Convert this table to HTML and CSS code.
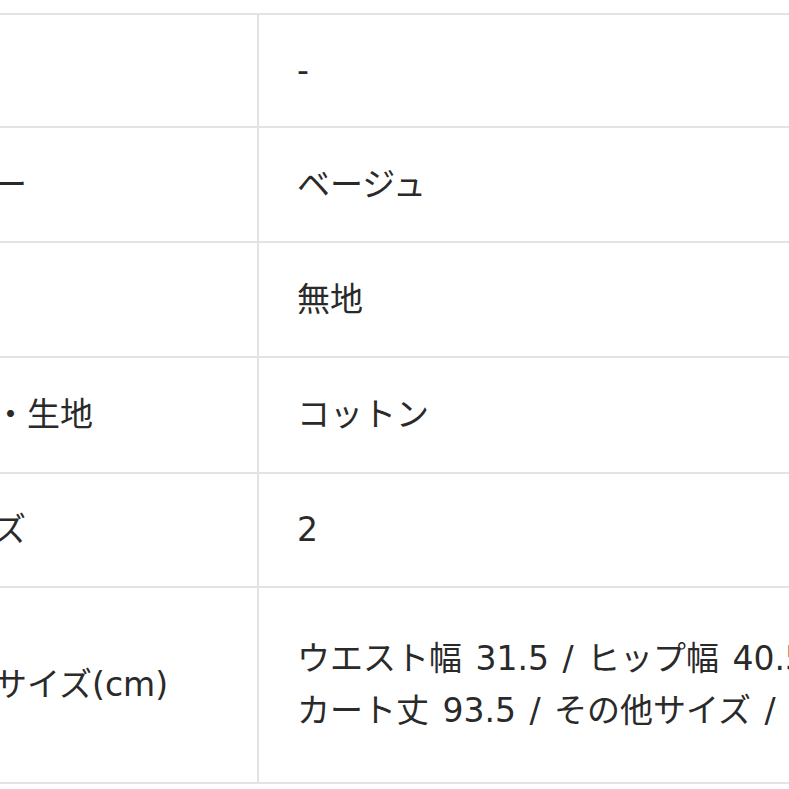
FILE: index.html
```html
<!DOCTYPE html>
<html lang="ja">
<head>
<meta charset="utf-8">
<link rel="stylesheet" href="styles.css">
</head>
<body>
<div class="spec">
  <div class="cell label r1">型番</div>
  <div class="cell value r1">-</div>
  <div class="cell label r2">カラー</div>
  <div class="cell value r2">ベージュ</div>
  <div class="cell label r3">柄</div>
  <div class="cell value r3">無地</div>
  <div class="cell label r4">素材・生地</div>
  <div class="cell value r4">コットン</div>
  <div class="cell label r5">サイズ</div>
  <div class="cell value r5">2</div>
  <div class="cell label r6">実寸サイズ(cm)</div>
  <div class="cell value r6">
    <div class="lines">
      <span class="line">ウエスト幅 31.5 / ヒップ幅 40.5 / ス</span>
      <span class="line">カート丈 93.5 / その他サイズ / 平置き</span>
    </div>
  </div>
</div>
</body>
</html>
```

FILE: styles.css
```css
html, body {
  margin: 0;
  padding: 0;
  background: #ffffff;
  overflow: hidden;
}
body {
  width: 789px;
  height: 789px;
  font-family: "DejaVu Sans", "Noto Sans CJK JP", sans-serif;
  color: #2a2a2a;
  font-size: 33px;
  line-height: 52px;
}
.spec {
  display: grid;
  grid-template-columns: 364px 760px;
  grid-template-rows: 113px 115px 115px 116px 114px 196px;
  margin-left: -105px;
  margin-top: 13px;
  border-top: 2px solid #e3e3e3;
  width: 1124px;
}
.cell {
  display: flex;
  align-items: center;
  padding-left: 38px;
  border-bottom: 2px solid #e3e3e3;
  box-sizing: border-box;
  white-space: nowrap;
}
.label {
  padding-left: 33px;
  border-right: 2px solid #e3e3e3;
}
.value {
  word-spacing: 3px;
}
.lines {
  display: flex;
  flex-direction: column;
}
.line {
  display: block;
}
```
